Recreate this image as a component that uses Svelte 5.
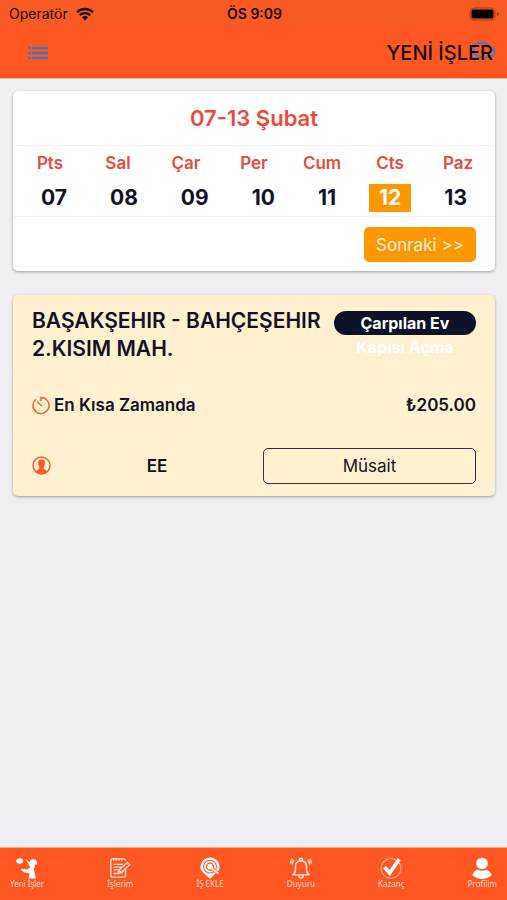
<script>
    const days = [
        {name: "Pts", date: "07"},
        {name: "Sal", date: "08"},
        {name: "Çar", date: "09"},
        {name: "Per", date: "10"},
        {name: "Cum", date: "11"},
        {name: "Cts", date: "12"},
        {name: "Paz", date: "13"}
    ];

    let selected = "12";

    const selectDay = (date) => {
        selected = date;
    };
</script>

<div class="app">
    <header class="header">
        <div class="status">
            <div class="status--carrier">
                <span>Operatör</span>
                <svg class="wifi" viewBox="0 0 18 14" aria-hidden="true">
                    <path d="M1 5.2A11.6 11.6 0 0 1 17 5.2M3.8 8.2a7.6 7.6 0 0 1 10.4 0" fill="none" stroke="#1a0802" stroke-width="2.3"/>
                    <path d="M6 10.3a4.4 4.4 0 0 1 6 0L9 13.4z" fill="#1a0802"/>
                </svg>
            </div>
            <span class="status--time">ÖS 9:09</span>
            <div class="status--battery">
                <svg class="battery" viewBox="0 0 31 14" aria-hidden="true">
                    <rect x="1" y="1" width="25" height="12" rx="4" fill="none" stroke="#a03a18"/>
                    <rect x="2.500" y="2.500" width="22" height="9" rx="2" fill="#000"/>
                    <path d="M28 5v4q2-.6 2-2t-2-2z" fill="#a03a18"/>
                </svg>
            </div>
        </div>
        <div class="toolbar">
            <button class="icon-button" aria-label="Menü">
                <svg class="menu" viewBox="0 0 20 14" aria-hidden="true">
                    <path d="M0 2h3M4 2h16M0 7h3M4 7h16M0 12h3M4 12h16" stroke="#4f72b4" stroke-width="2.400"/>
                </svg>
            </button>
            <div class="toolbar--title">
                <button class="icon-button refresh" aria-label="Yenile">
                    <svg viewBox="0 0 25 20" aria-hidden="true">
                        <path d="M2.500 10q-.5-7.500 8-8.500 6 0 8.500 5 5 .5 4.500 5.500-.5 4-5.500 4H9q-5-.5-6.500-6M9 11l4-1.500" fill="none" stroke="#4f78c4" stroke-width="2.200"/>
                    </svg>
                </button>
                <h1>YENİ İŞLER</h1>
            </div>
        </div>
    </header>

    <main class="content">
        <section class="card">
            <h2 class="week">07-13 Şubat</h2>
            <div class="calendar">
                <div class="names">
                    {#each days as day}
                        <span>{day.name}</span>
                    {/each}
                </div>
                <div class="dates">
                    {#each days as day}
                        <button class="date" class:active={day.date === selected} on:click={() => selectDay(day.date)}>{day.date}</button>
                    {/each}
                </div>
            </div>
            <div class="card--footer">
                <button class="next">Sonraki &gt;&gt;</button>
            </div>
        </section>

        <section class="card job">
            <div class="job--top">
                <h3>BAŞAKŞEHIR - BAHÇEŞEHIR 2.KISIM MAH.</h3>
                <div class="badge">Çarpılan Ev Kapısı Açma</div>
            </div>
            <div class="job--row">
                <svg class="job--icon" viewBox="0 0 19 19" aria-hidden="true">
                    <path d="M9 4.500V1.500a8 8 0 1 1-5.500 2.200M9.500 9.800L5.500 6" fill="none" stroke="#f4623a" stroke-width="1.500" stroke-linecap="round"/>
                </svg>
                <span class="job--time">En Kısa Zamanda</span>
                <span class="job--price">₺205.00</span>
            </div>
            <div class="job--row job--person">
                <svg class="job--icon" viewBox="0 0 19 19" aria-hidden="true">
                    <circle cx="9.500" cy="9.500" r="8.500" fill="none" stroke="#f4623a" stroke-width="1.500"/>
                    <path d="M9.500 3.500c2.300 0 3.600 1.200 3.400 3.500-.1 1.900-.6 2.900-1.100 3.600v2.500c.4 1 2.800 1 3.700 2.200a8.300 8.300 0 0 1-12 0c.9-1.200 3.300-1.200 3.700-2.200v-2.500c-.5-.7-1-1.700-1.100-3.600-.2-2.300 1.100-3.500 3.400-3.500z" fill="#ff5722"/>
                </svg>
                <span class="job--name">EE</span>
                <button class="available">Müsait</button>
            </div>
        </section>
    </main>

    <nav class="tabs">
        <a href="#yeni-isler">
            <svg viewBox="0 0 24 24" aria-hidden="true">
                <path d="M0 4.500q0-2 2-2.500Q4 .5 6 2q2 .5 2 2.500Q7 7.500 4 7.500 1 7.500 0 4.500z" fill="#fff"/>
                <path d="M15.500 4q2-2 4.500-1.500 3.500 1 3 6l-2.500-.5v3l-1 2 1 5.500 1.500 5h-8.500l1.500-5.500-5.500-1-4-2.500 1-1.800 5.500 1 3.500-2.200-2-4.500-3-4 1.200-.8 3 3.800z" fill="#fff"/>
            </svg>
            <span>Yeni İşler</span>
        </a>
        <a href="#islerim">
            <svg viewBox="0 0 24 24" aria-hidden="true">
                <path d="M18 13v7q0 2-2 2H4q-2 0-2-2V4q0-2 2-2h12q2 0 2 2M5 1v3M8 1v3M11 1v3M14 1v3M5 8h10M5 11h8M5 14h5M5 18h4" fill="none" stroke="#ffe0d4" stroke-width="1.500"/>
                <path d="M10 18l1-4 9-8 2.500 2.500-9 8.500zM11 14l2.500 3" fill="#ff5722" stroke="#ffe0d4" stroke-width="1.500"/>
            </svg>
            <span>İşlerim</span>
        </a>
        <a href="#is-ekle">
            <svg viewBox="0 0 24 24" aria-hidden="true">
                <path d="M12 .5a10.500 10.500 0 0 1 10.500 10.500c0 5.500-6 7.500-10.500 13C7.500 18.500 1.500 16.500 1.500 11A10.500 10.500 0 0 1 12 .5z" fill="#fff"/>
                <circle cx="12" cy="10.500" r="7" fill="none" stroke="#ff5722" stroke-width="1.200"/>
                <circle cx="12" cy="10.500" r="3.800" fill="none" stroke="#ff5722" stroke-width="1.500"/>
                <path d="M14.500 13l6.500 5" stroke="#ff5722" stroke-width="3.600"/>
                <path d="M14 12.500l7 5.500" stroke="#fff" stroke-width="2"/>
            </svg>
            <span>İŞ EKLE</span>
        </a>
        <a href="#duyuru">
            <svg viewBox="0 0 24 24" aria-hidden="true">
                <path d="M3 19.500q3-2 3-6V10q0-5.500 6-6 6 .5 6 6v3.500q0 4 3 6zM10.500 4V1.500h3V4M9.500 20q0 3 2.500 3t2.500-3M4.500 3.500Q3 5 2.500 8M19.500 3.500q1.500 1.500 2 4.500M2.500 2Q1 4 .5 7M21.500 2q1.500 2 2 5" fill="none" stroke="#ffe8df" stroke-width="1.600" stroke-linejoin="round"/>
            </svg>
            <span>Duyuru</span>
        </a>
        <a href="#kazanc">
            <svg viewBox="0 0 24 24" aria-hidden="true">
                <circle cx="12" cy="12.500" r="10.800" fill="none" stroke="#ffc0a8" stroke-width="1.100"/>
                <path d="M5 11l5.500 6.500L21 2.500" fill="none" stroke="#fff" stroke-width="4"/>
            </svg>
            <span>Kazanç</span>
        </a>
        <a href="#profilim">
            <svg viewBox="0 0 24 24" aria-hidden="true">
                <circle cx="12" cy="7" r="6.300" fill="#fff"/>
                <path d="M7 13.500q5 3 10 0 4 1.500 5.500 6.500-4.500 4-10.500 4T1.500 20Q3 15 7 13.500z" fill="#fff"/>
            </svg>
            <span>Profilim</span>
        </a>
    </nav>
</div>

<style>
    :global(body) {
        margin: 0;
        background: #efeef3;
    }

    .app {
        display: flex;
        flex-direction: column;
        min-height: 100vh;
        color: #111325;
        font-family: Inter, "Noto Sans", sans-serif;
    }

    h1, h2, h3 {
        margin: 0;
    }

    button {
        padding: 0;
        border: 0;
        background: none;
        color: inherit;
        font: inherit;
        cursor: pointer;
    }

    svg {
        display: block;
    }

    .header {
        background: #ff5722;
        border-bottom: 1px solid #f9ab94;
    }

    .status {
        display: flex;
        align-items: center;
        height: 27px;
        padding: 0 7px 0 9px;
        background: #f85a24;
        color: #1a0802;
        font-size: 14px;
    }

    .status--carrier, .status--battery {
        display: flex;
        flex: 1;
        align-items: center;
        gap: 8px;
    }

    .status--battery {
        justify-content: flex-end;
    }

    .status--time {
        font-weight: 600;
    }

    .wifi {
        width: 18px;
        height: 14px;
    }

    .battery {
        width: 31px;
        height: 14px;
    }

    .toolbar {
        display: flex;
        align-items: center;
        justify-content: space-between;
        height: 51px;
        padding: 0 14px 0 28px;
    }

    .menu {
        width: 20px;
        height: 14px;
    }

    .toolbar--title {
        position: relative;
    }

    .toolbar--title h1 {
        position: relative;
        color: #140804;
        font-size: 20px;
        font-weight: 500;
        line-height: 24px;
        pointer-events: none;
    }

    .refresh {
        position: absolute;
        top: 0;
        right: -3px;
        width: 25px;
    }

    .content {
        display: flex;
        flex: 1;
        flex-direction: column;
        gap: 24px;
        padding: 12px 12px 24px 13px;
    }

    .card {
        border-radius: 5px;
        background: #fff;
        box-shadow: 0 1px 3px rgba(0, 0, 0, 0.35);
    }

    .week {
        color: #e94b3c;
        font-size: 22px;
        font-weight: 600;
        line-height: 54px;
        text-align: center;
        border-bottom: 1px solid #f2f2f4;
    }

    .calendar {
        border-bottom: 1px solid #f2f2f4;
    }

    .names {
        display: flex;
        padding: 4px 3px 0;
        color: #e94b3c;
        font-size: 17px;
        font-weight: 600;
        line-height: 26px;
    }

    .names span {
        flex: 1;
        text-align: center;
    }

    .dates {
        display: flex;
        justify-content: space-between;
        padding: 8px 18px 4px;
    }

    .date {
        padding: 0 10px;
        font-size: 21px;
        font-weight: 700;
        line-height: 28px;
    }

    .active {
        background: #ff9800;
        color: #fff;
    }

    .card--footer {
        display: flex;
        justify-content: flex-end;
        padding: 10px 19px 9px;
    }

    .next {
        width: 112px;
        height: 35px;
        border-radius: 5px;
        background: #ff9800;
        color: #fff3e0;
        font-size: 17px;
    }

    .job {
        background: #fff1cf;
    }

    .job--top {
        display: flex;
        align-items: flex-start;
        gap: 8px;
        padding: 12px 19px;
        border-bottom: 1px solid #fcefcf;
    }

    .job--top h3 {
        flex: 1;
        font-size: 21px;
        font-weight: 600;
        line-height: 28px;
    }

    .badge {
        box-sizing: border-box;
        width: 32%;
        height: 24px;
        margin-top: 4px;
        padding: 0 20px;
        border-radius: 12px;
        background: #0d1228;
        color: #fff;
        font-size: 16px;
        font-weight: 700;
        line-height: 24px;
        text-align: center;
    }

    .job--row {
        display: flex;
        align-items: center;
        height: 58px;
        padding: 0 19px;
        border-bottom: 1px solid #fcefcf;
        font-size: 17px;
        font-weight: 600;
    }

    .job--person {
        height: 61px;
        border: 0;
    }

    .job--icon {
        width: 19px;
        height: 19px;
    }

    .job--time {
        flex: 1;
        padding-left: 3px;
    }

    .job--name {
        flex: 1;
        text-align: center;
    }

    .available {
        width: 48%;
        height: 36px;
        border: 1px solid #303244;
        border-radius: 5px;
        font-weight: 400;
    }

    .tabs {
        display: flex;
        justify-content: space-between;
        padding: 9px 10px 11px;
        border-top: 1px solid #f9ab94;
        background: #ff5722;
    }

    .tabs a {
        display: flex;
        flex-direction: column;
        align-items: center;
        color: #ffd9cb;
        font-family: "Noto Sans", sans-serif;
        font-size: 8px;
        line-height: 10px;
        text-decoration: none;
    }

    .tabs svg {
        width: 22px;
        height: 22px;
    }
</style>
